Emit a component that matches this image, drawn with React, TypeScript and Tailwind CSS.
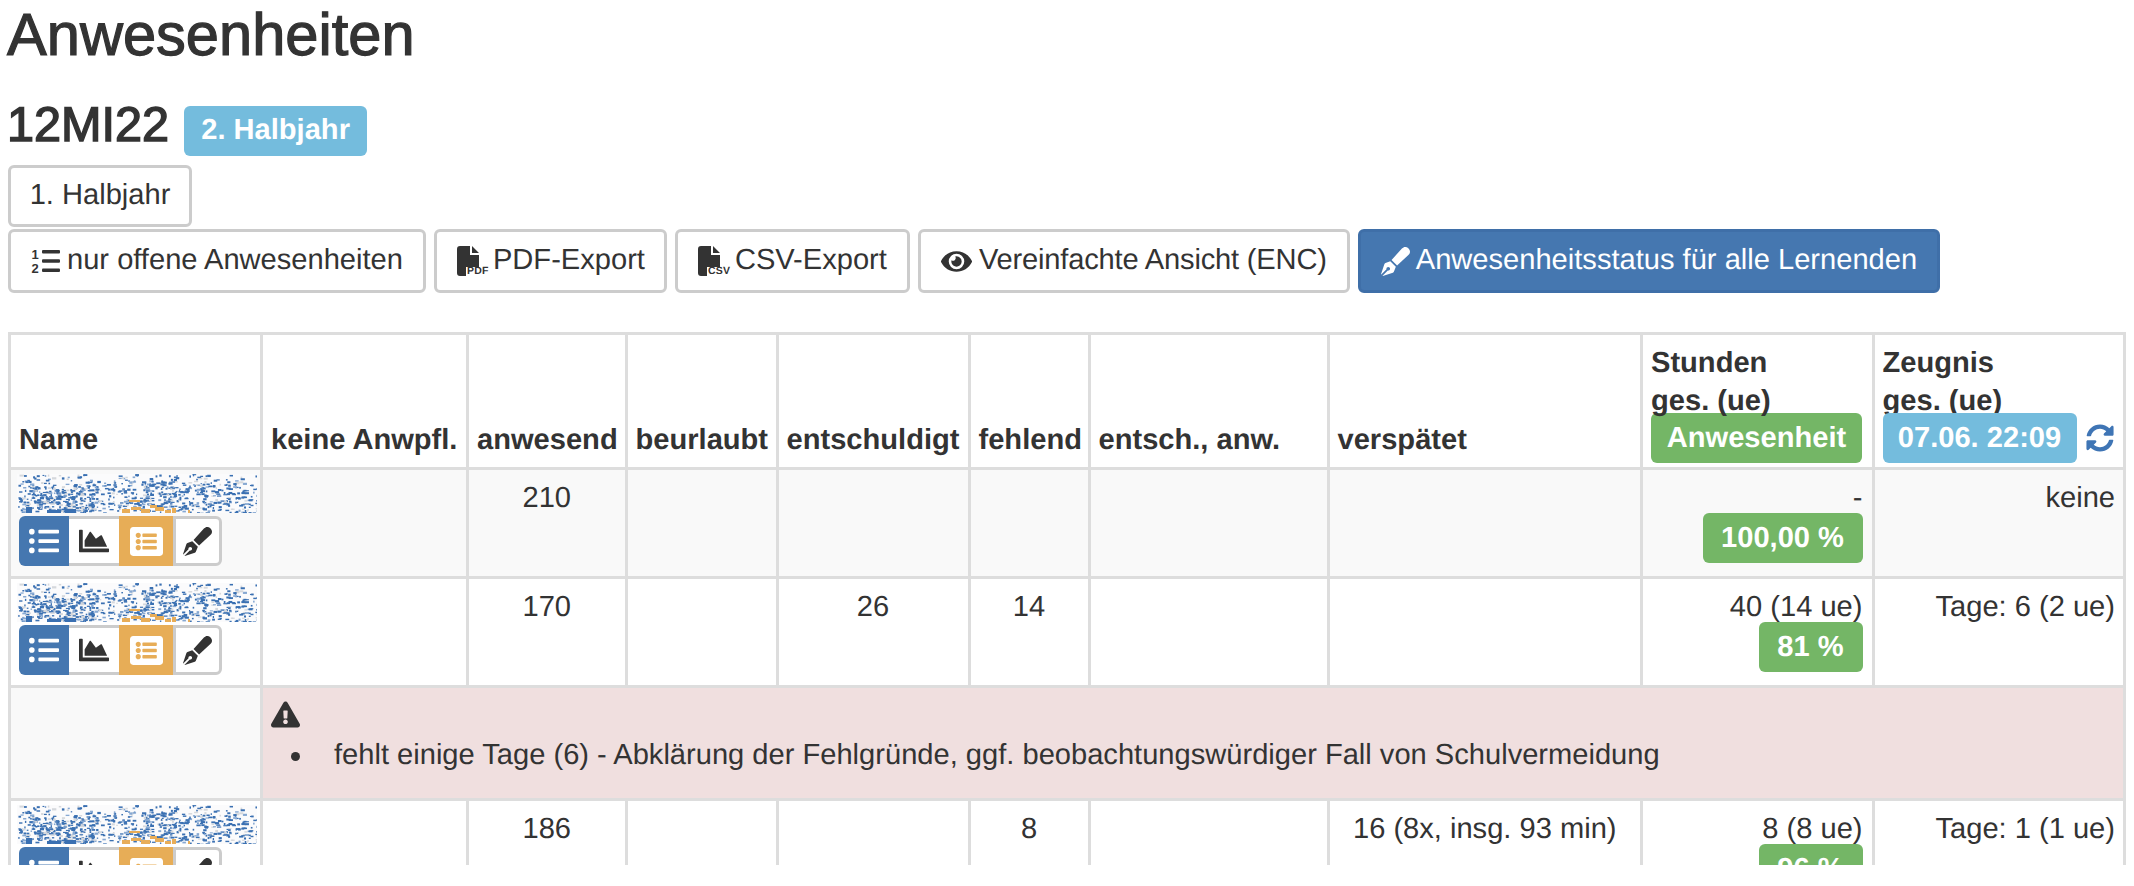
import React from "react";
import { FaEye, FaPenFancy, FaListUl, FaChartArea, FaListAlt, FaSyncAlt, FaExclamationTriangle } from "react-icons/fa";

function noiseRects(seed: number) {
  let s = seed;
  const rnd = () => {
    s = (s * 1664525 + 1013904223) % 4294967296;
    return s / 4294967296;
  };
  const out: { x: number; y: number; w: number; h: number; c: string }[] = [];
  for (let i = 0; i < 1500; i++) {
    const x = rnd() * 240;
    const y = rnd() * 39;
    const r = rnd();
    const dense = x > 15 && x < 75 && y > 12 && y < 36 ? 1 : x > 125 && x < 165 && y > 6 && y < 28 ? 0.7 : y < 8 ? 0.28 : 0.5;
    if (rnd() > dense) continue;
    out.push({
      x,
      y,
      w: 1.2 + rnd() * 3.2,
      h: 1.1 + rnd() * 1.2,
      c: r < 0.7 ? "#3a70b2" : r < 0.86 ? "#d5d8dc" : "#86a8d2",
    });
  }
  out.push({ x: 9, y: 33, w: 6, h: 6, c: "#3a70b2" });
  out.push({ x: 30, y: 36, w: 14, h: 3, c: "#3a70b2" });
  out.push({ x: 48, y: 35, w: 11, h: 4, c: "#3a70b2" });
  const orange = [
    [112, 26, 11, 2],
    [105, 35, 8, 4],
    [114, 33, 10, 3],
    [124, 35, 9, 4],
    [133, 31, 7, 3],
    [138, 33, 9, 4],
    [148, 36, 6, 3],
    [155, 34, 4, 5],
    [171, 36, 2, 3],
  ];
  orange.forEach(([x, y, w, h]) => out.push({ x, y, w, h, c: "#e8ad58" }));
  return out;
}

const rectsA = noiseRects(1234);

function Noise() {
  return (
    <svg width="240" height="39" viewBox="0 0 240 39" className="block bg-[#fbfbfc] blur-[0.3px]">
      {rectsA.map((r, i) => (
        <rect key={i} x={r.x} y={r.y} width={r.w} height={r.h} fill={r.c} />
      ))}
    </svg>
  );
}

function FileIcon({ label, gap }: { label: string; gap: string }) {
  return (
    <span className={"relative inline-block w-[30px] h-[30px] shrink-0 " + gap}>
      <svg width="23" height="30" viewBox="0 0 23 30" className="absolute left-0 top-0">
        <path d="M3 0H13V9H22V21H9V30H3A3 3 0 0 1 0 27V3A3 3 0 0 1 3 0ZM15 0L22 7H15Z" fill="#333" />
      </svg>
      <span className="absolute left-[10px] bottom-[-1px] text-[10.5px] leading-[11px] font-bold text-[#333] tracking-[0.3px]">{label}</span>
    </span>
  );
}

function OneTwoIcon() {
  return (
    <svg width="29" height="28" viewBox="0 0 29 28" className="mr-[7px] shrink-0 overflow-visible">
      <text x="0.5" y="12" fontSize="13" fontWeight="bold" fill="#333">1</text>
      <text x="0.5" y="26" fontSize="13" fontWeight="bold" fill="#333">2</text>
      <rect x="11" y="3" width="18" height="3.4" rx="1" fill="#333" />
      <rect x="11" y="12.3" width="18" height="3.4" rx="1" fill="#333" />
      <rect x="11" y="21.6" width="18" height="3.4" rx="1" fill="#333" />
    </svg>
  );
}

function Btn({ children, primary, cls }: { children: React.ReactNode; primary?: boolean; cls?: string }) {
  return (
    <div
      className={
        "flex items-center h-[64px] rounded-[6px] border-[3px] whitespace-nowrap " +
        (cls ?? "px-[20px]") +
        " " +
        (primary ? "bg-[#4577b0] border-[#3f6fa8] text-white" : "bg-white border-[#cccccc] text-[#333]")
      }
    >
      {children}
    </div>
  );
}

function BtnGroup() {
  return (
    <div className="flex h-[50px] w-[203px] mt-[3px] ml-[2px]">
      <div className="w-[50px] bg-[#4577b0] rounded-l-[6px] flex items-center justify-center text-white text-[30px]">
        <FaListUl />
      </div>
      <div className="w-[50px] bg-white border-y-[3px] border-[#cccccc] flex items-center justify-center text-[#333] text-[30px]">
        <FaChartArea />
      </div>
      <div className="w-[54px] bg-[#e7ad57] flex items-center justify-center text-white text-[33px]">
        <FaListAlt />
      </div>
      <div className="w-[49px] bg-white border-y-[3px] border-r-[3px] border-l-[3px] border-[#cccccc] rounded-r-[6px] flex items-center justify-center text-[#333] text-[29px]">
        <FaPenFancy />
      </div>
    </div>
  );
}

function Badge({ color, w, children }: { color: string; w?: string; children: React.ReactNode }) {
  return (
    <div className={"h-[50px] rounded-[6px] flex items-center justify-center text-white font-bold whitespace-nowrap " + color + " " + (w ?? "")}>
      {children}
    </div>
  );
}

const td = "border-[3px] border-[#dddddd] align-top px-[8px] pt-[12px] text-center leading-[32px]";
const tdR = "border-[3px] border-[#dddddd] align-top px-[9px] pt-[12px] text-right leading-[32px]";
const tdZ = "border-[3px] border-[#dddddd] align-top px-[8px] pt-[12px] text-right leading-[32px]";
const th = "border-[3px] border-[#dddddd] align-bottom px-[8px] pb-[8px] text-left font-bold leading-[38px] whitespace-nowrap";
const thBadge = "border-[3px] border-[#dddddd] align-bottom px-[8px] pb-[4px] text-left font-bold leading-[38px] whitespace-nowrap";

function Row({
  bg,
  a,
  e,
  f,
  v,
  s,
  pct,
  pw,
  z,
}: {
  bg: string;
  a: string;
  e?: string;
  f?: string;
  v?: string;
  s: string;
  pct: string;
  pw: string;
  z: string;
}) {
  return (
    <tr className={"h-[109px] " + bg}>
      <td className="border-[3px] border-[#dddddd] align-top px-[6px] pt-[4px]">
        <Noise />
        <BtnGroup />
      </td>
      <td className={td}></td>
      <td className={td}>{a}</td>
      <td className={td}></td>
      <td className={td}>{e}</td>
      <td className={td}>{f}</td>
      <td className={td}></td>
      <td className={td}>{v}</td>
      <td className={tdR}>
        <div>{s}</div>
        <div className="flex justify-end -mt-[1px]">
          <Badge color="bg-[#74b666]" w={pw}>{pct}</Badge>
        </div>
      </td>
      <td className={tdZ}>{z}</td>
    </tr>
  );
}

export default function App() {
  return (
    <div className="h-[865px] overflow-hidden bg-white text-[#333] font-['Liberation_Sans',Arial,sans-serif] text-[29.1px] [text-rendering:geometricPrecision] pl-[8px] pt-[2px]">
      <h1 className="text-[59.6px] leading-[65px] [-webkit-text-stroke:1.2px_#333] -ml-[1px]">Anwesenheiten</h1>
      <div className="flex items-start gap-[15px] mt-[32px] h-[66px] -ml-[1px]">
        <h3 className="text-[48.6px] leading-[53px] [-webkit-text-stroke:1.5px_#333]">12MI22</h3>
        <div className="mt-[7px]">
          <Badge color="bg-[#74bcdd]" w="w-[183px]">2. Halbjahr</Badge>
        </div>
      </div>
      <div className="flex mb-[2px]">
        <div className="flex items-center h-[62px] w-[184px] justify-center rounded-[6px] border-[3px] border-[#cccccc]">1. Halbjahr</div>
      </div>
      <div className="flex gap-[8px] mb-[39px]">
        <Btn><OneTwoIcon />nur offene Anwesenheiten</Btn>
        <Btn cls="pl-[20px] pr-[19px]"><FileIcon label="PDF" gap="mr-[6px]" />PDF-Export</Btn>
        <Btn cls="pl-[20px] pr-[20px]"><FileIcon label="CSV" gap="mr-[7px]" />CSV-Export</Btn>
        <Btn cls="pl-[20px] pr-[20px] tracking-[-0.18px]"><FaEye className="text-[31px] mr-[7px]" />Vereinfachte Ansicht (ENC)</Btn>
        <Btn primary cls="pl-[20px] pr-[20px]"><FaPenFancy className="text-[29px] mr-[6px]" />Anwesenheitsstatus für alle Lernenden</Btn>
      </div>
      <table className="table-fixed border-collapse w-[2118px]">
        <colgroup>
          <col className="w-[252px]" />
          <col className="w-[206px]" />
          <col className="w-[158.5px]" />
          <col className="w-[151px]" />
          <col className="w-[192px]" />
          <col className="w-[120px]" />
          <col className="w-[239px]" />
          <col className="w-[313.5px]" />
          <col className="w-[231.5px]" />
          <col className="w-[251.5px]" />
        </colgroup>
        <thead>
          <tr className="h-[135px]">
            <th className={th}>Name</th>
            <th className={th}>keine Anwpfl.</th>
            <th className={th}>anwesend</th>
            <th className={th}>beurlaubt</th>
            <th className={th}>entschuldigt</th>
            <th className={th}>fehlend</th>
            <th className={th}>entsch., anw.</th>
            <th className={th}>verspätet</th>
            <th className={thBadge}>
              <div>Stunden</div>
              <div className="h-[26px]">ges. (ue)</div>
              <Badge color="bg-[#74b666]" w="w-[211px] mt-[5px]">Anwesenheit</Badge>
            </th>
            <th className={thBadge}>
              <div>Zeugnis</div>
              <div className="h-[26px]">ges. (ue)</div>
              <div className="flex items-center mt-[5px] gap-[9px]">
                <Badge color="bg-[#74bcdd]" w="w-[194px]">07.06. 22:09</Badge>
                <FaSyncAlt className="text-[#3f75b5] text-[28px]" />
              </div>
            </th>
          </tr>
        </thead>
        <tbody>
          <Row bg="bg-[#f9f9f9]" a="210" s="-" pct="100,00 %" pw="w-[160px]" z="keine" />
          <Row bg="bg-white" a="170" e="26" f="14" s="40 (14 ue)" pct="81 %" pw="w-[104px]" z="Tage: 6 (2 ue)" />
          <tr className="h-[113px]">
            <td className="border-[3px] border-[#dddddd] bg-[#f9f9f9]"></td>
            <td colSpan={9} className="border-[3px] border-[#dddddd] bg-[#f0dfdf] align-top pl-[8px] pt-[12px]">
              <FaExclamationTriangle className="text-[29px] text-[#333] block" />
              <div className="flex items-center mt-[7px] h-[40px]">
                <span className="w-[9px] h-[9px] rounded-full bg-[#333] ml-[20px] mr-[34px]"></span>
                <span>fehlt einige Tage (6) - Abklärung der Fehlgründe, ggf. beobachtungswürdiger Fall von Schulvermeidung</span>
              </div>
            </td>
          </tr>
          <Row bg="bg-white" a="186" f="8" v="16 (8x, insg. 93 min)" s="8 (8 ue)" pct="96 %" pw="w-[104px]" z="Tage: 1 (1 ue)" />
        </tbody>
      </table>
    </div>
  );
}
